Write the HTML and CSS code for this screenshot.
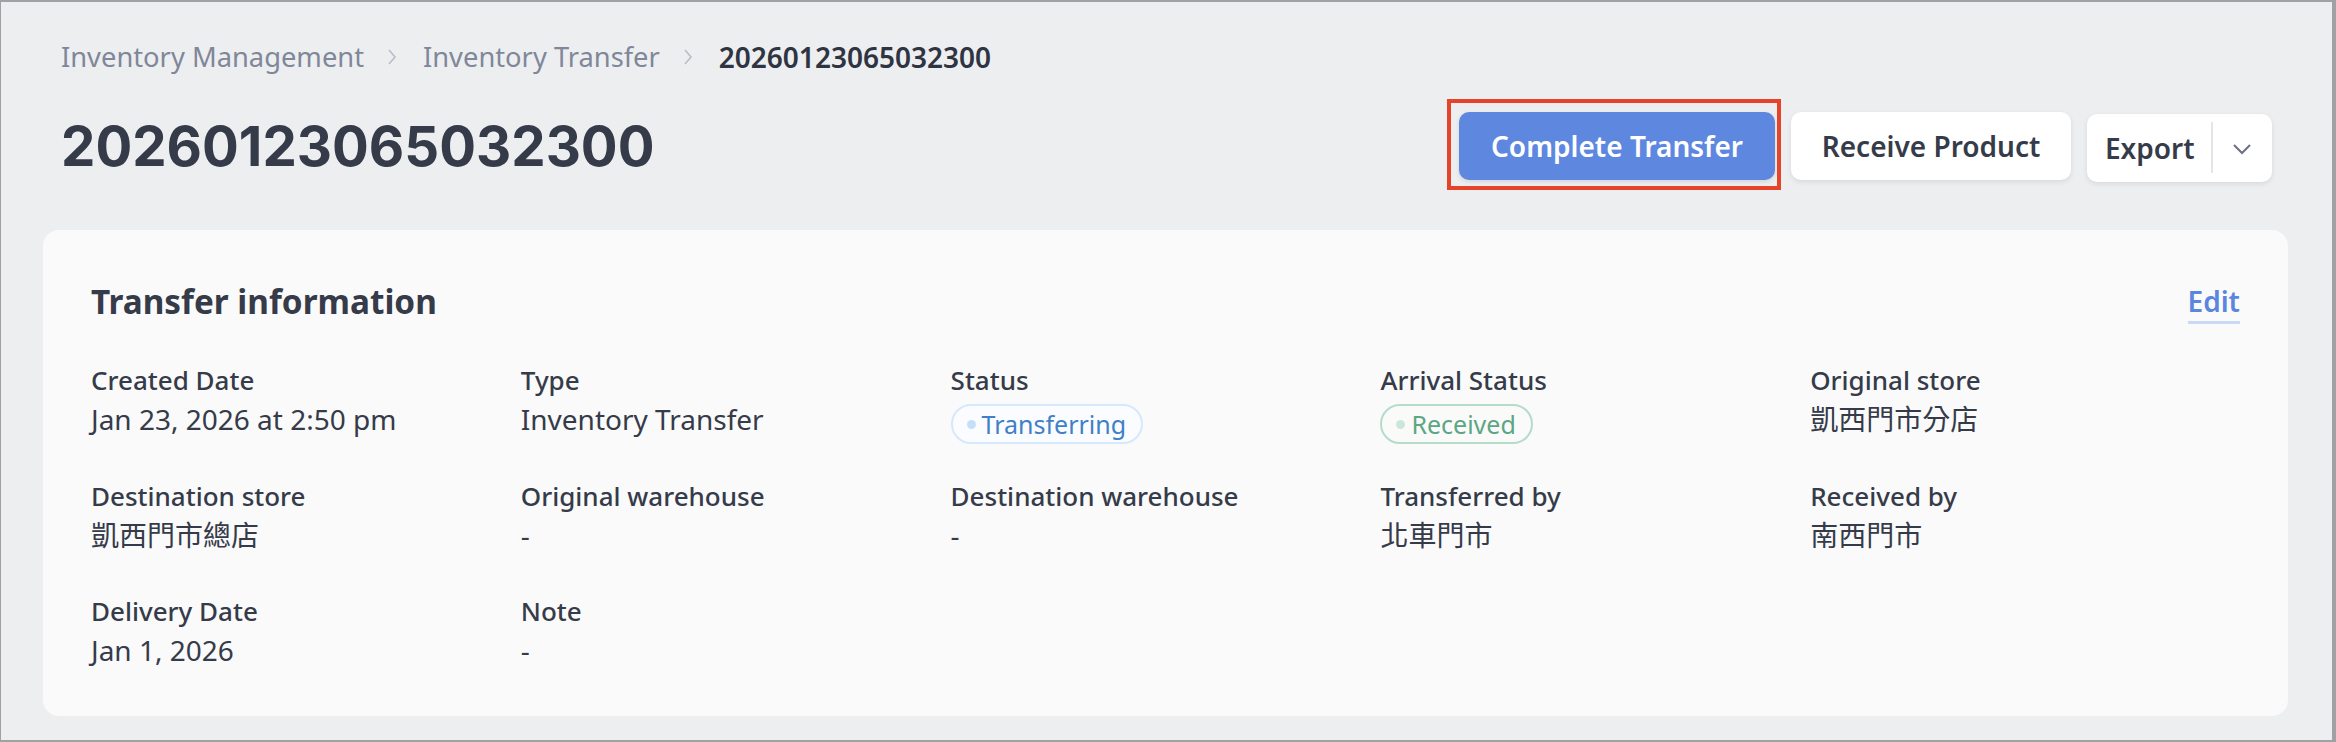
FILE: index.html
```html
<!DOCTYPE html>
<html lang="en">
<head>
<meta charset="utf-8">
<title>20260123065032300</title>
<link rel="stylesheet" href="styles.css">
</head>
<body>
<div class="frame">
  <nav class="breadcrumb">
    <span class="crumb">Inventory Management</span>
    <svg class="crumb-sep" width="10" height="18" viewBox="0 0 10 18"><path d="M2 2l6 7-6 7" fill="none" stroke="#b9bdc7" stroke-width="1.6"/></svg>
    <span class="crumb">Inventory Transfer</span>
    <svg class="crumb-sep" width="10" height="18" viewBox="0 0 10 18"><path d="M2 2l6 7-6 7" fill="none" stroke="#b9bdc7" stroke-width="1.6"/></svg>
    <span class="crumb current">20260123065032300</span>
  </nav>

  <header class="page-header">
    <h1 class="title">20260123065032300</h1>
    <div class="actions">
      <div class="highlight-wrap">
        <button class="btn btn-primary">Complete Transfer</button>
        <span class="highlight"></span>
      </div>
      <button class="btn btn-white">Receive Product</button>
      <div class="btn-group">
        <span class="group-label">Export</span>
        <span class="group-divider"></span>
        <span class="group-caret">
          <svg width="22" height="14" viewBox="0 0 22 14"><path d="M3 3l8 8 8-8" fill="none" stroke="#6a7184" stroke-width="2"/></svg>
        </span>
      </div>
    </div>
  </header>

  <section class="card">
    <div class="card-head">
      <h2 class="card-title">Transfer information</h2>
      <a class="edit-link">Edit</a>
    </div>
    <div class="fields">
      <div class="field"><div class="label">Created Date</div><div class="value">Jan 23, 2026 at 2:50 pm</div></div>
      <div class="field"><div class="label">Type</div><div class="value">Inventory Transfer</div></div>
      <div class="field"><div class="label">Status</div><div class="value"><span class="badge badge-blue"><span class="dot"></span>Transferring</span></div></div>
      <div class="field"><div class="label">Arrival Status</div><div class="value"><span class="badge badge-green"><span class="dot"></span>Received</span></div></div>
      <div class="field"><div class="label">Original store</div><div class="value">凱西門市分店</div></div>

      <div class="field"><div class="label">Destination store</div><div class="value">凱西門市總店</div></div>
      <div class="field"><div class="label">Original warehouse</div><div class="value">-</div></div>
      <div class="field"><div class="label">Destination warehouse</div><div class="value">-</div></div>
      <div class="field"><div class="label">Transferred by</div><div class="value">北車門市</div></div>
      <div class="field"><div class="label">Received by</div><div class="value">南西門市</div></div>

      <div class="field"><div class="label">Delivery Date</div><div class="value">Jan 1, 2026</div></div>
      <div class="field"><div class="label">Note</div><div class="value">-</div></div>
    </div>
  </section>
</div>
</body>
</html>
```

FILE: styles.css
```css
* { box-sizing: border-box; }
html, body { margin: 0; padding: 0; }
body {
  font-family: "Noto Sans", "Noto Sans CJK TC", sans-serif;
  color: #363b4a;
  background: #edeef0;
}
.frame {
  width: 2336px;
  height: 742px;
  background: #edeef0;
  border-style: solid;
  border-color: #a0a1a4;
  border-width: 2px 4px 2px 1px;
  padding: 35px 44px 0 42px;
  overflow: hidden;
}
.breadcrumb {
  display: flex;
  align-items: center;
  padding-left: 18px;
  height: 40px;
  font-size: 27.3px;
  line-height: 40px;
  white-space: nowrap;
}
.crumb { color: #7f8799; }
.crumb.current { color: #2f3442; font-weight: 600; font-size: 28px; }
.crumb-sep { margin: 0 26px 0 23px; }

.page-header {
  display: flex;
  align-items: center;
  justify-content: space-between;
  margin-top: 35px;
  padding: 0 16px 0 18px;
  height: 68px;
}
.title {
  margin: 0;
  font-family: Inter, "Liberation Sans", sans-serif;
  font-weight: 700;
  font-size: 54.6px;
  line-height: 68px;
  color: #363b4a;
}
.actions {
  display: flex;
  align-items: center;
  gap: 16px;
}
.highlight-wrap { position: relative; display: flex; }
.highlight {
  position: absolute;
  left: -12px;
  top: -13px;
  right: -6px;
  bottom: -10px;
  border: 4px solid #e6432b;
  pointer-events: none;
}
.btn {
  font-family: "Noto Sans", sans-serif;
  font-size: 28px;
  font-weight: 600;
  height: 68px;
  border: none;
  border-radius: 10px;
  padding: 0 30px;
  white-space: nowrap;
  cursor: pointer;
}
.btn-primary {
  background: #5e88df;
  color: #ffffff;
  width: 316px;
  box-shadow: 0 2px 4px rgba(30, 40, 60, 0.12);
}
.btn-white {
  background: #ffffff;
  color: #363b4a;
  width: 280px;
  box-shadow: 0 2px 5px rgba(30, 40, 60, 0.1);
}
.btn-group {
  display: flex;
  align-items: center;
  height: 68px;
  width: 185px;
  margin-top: 3px;
  background: #ffffff;
  border-radius: 10px;
  box-shadow: 0 2px 5px rgba(30, 40, 60, 0.1);
  font-size: 28px;
  font-weight: 600;
  color: #363b4a;
}
.group-label { padding: 0 16px 0 18px; }
.group-divider {
  width: 2px;
  height: 51px;
  background: #e3e5e9;
}
.group-caret {
  flex: 1;
  display: flex;
  justify-content: center;
  align-items: center;
  padding-top: 2px;
}

.card {
  margin-top: 50px;
  background: #fafafa;
  border-radius: 16px;
  padding: 47px 48px 48px 48px;
  height: 486px;
}
.card-head {
  display: flex;
  justify-content: space-between;
  align-items: flex-start;
}
.card-title {
  margin: 0;
  font-size: 33.3px;
  font-weight: 700;
  line-height: 48px;
  color: #363b4a;
}
.edit-link {
  margin-top: 6px;
  font-size: 28px;
  font-weight: 600;
  line-height: 36px;
  color: #5b86df;
  border-bottom: 3px solid #c9d9f6;
  padding-bottom: 2px;
  cursor: pointer;
}
.fields {
  display: grid;
  grid-template-columns: repeat(5, 1fr);
  grid-auto-rows: 76.5px;
  row-gap: 39px;
  margin-top: 37px;
}
.label {
  font-size: 26px;
  font-weight: 500;
  line-height: 36px;
  color: #363b4a;
}
.value {
  margin-top: 1px;
  font-size: 28px;
  font-weight: 400;
  line-height: 40px;
  color: #363b4a;
}
.badge {
  display: inline-flex;
  align-items: center;
  height: 40px;
  margin-top: 5px;
  padding: 0 15px 0 14px;
  border-radius: 20px;
  border: 2px solid;
  font-size: 25px;
  line-height: 36px;
  vertical-align: top;
}
.badge .dot {
  width: 9px;
  height: 9px;
  border-radius: 50%;
  margin-right: 6px;
}
.badge-blue { border-color: #d6e8fb; color: #3f80c6; background: #fafcff; }
.badge-blue .dot { background: #c6dff8; }
.badge-green { border-color: #b4dcc9; color: #5ca783; }
.badge-green .dot { background: #cde6da; }
```
